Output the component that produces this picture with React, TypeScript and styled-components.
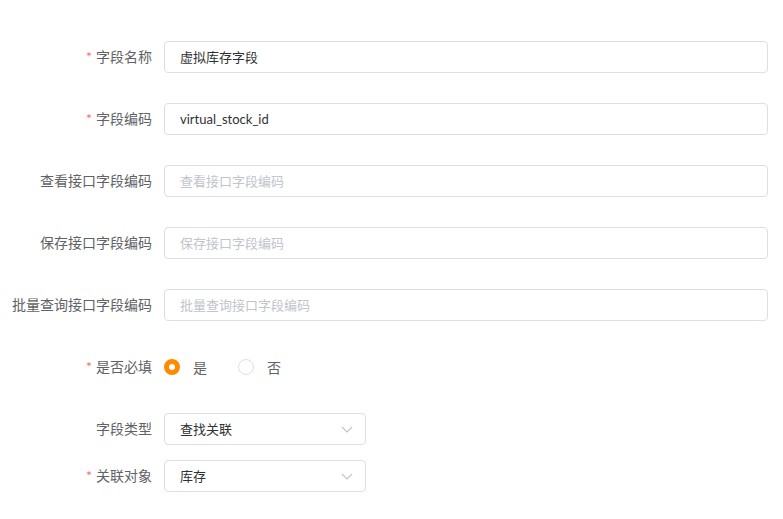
import React from "react";
import styled, { createGlobalStyle } from "styled-components";

const Global = createGlobalStyle`
  html, body { margin: 0; padding: 0; background: #fff; }
  body { font-family: Lato, "Noto Sans CJK SC", sans-serif; font-size: 14px; color: #303133; }
  * { box-sizing: border-box; }
`;

const Form = styled.div`
  display: flex;
  flex-direction: column;
  padding: 41px 15px 0 0;
  width: 783px;
`;

const Row = styled.div<{ $mb: number }>`
  display: flex;
  align-items: center;
  height: 32px;
  margin-bottom: ${(p) => p.$mb}px;
`;

const Label = styled.div`
  width: 152px;
  margin-right: 12px;
  text-align: right;
  color: #606266;
  font-size: 14px;
  line-height: 32px;
  white-space: nowrap;
`;

const Star = styled.span`
  color: #f56c6c;
  margin-right: 4px;
`;

const Input = styled.input`
  flex: 1;
  height: 32px;
  border: 1px solid #dcdfe6;
  border-radius: 4px;
  padding: 0 15px 1px;
  font-family: Lato, "Noto Sans CJK SC", sans-serif;
  font-size: 13px;
  color: #303133;
  outline: none;
  &::placeholder { color: #c0c4cc; }
`;

const Select = styled.div`
  width: 202px;
  height: 32px;
  border: 1px solid #dcdfe6;
  border-radius: 4px;
  padding: 0 12px 1px 15px;
  display: flex;
  align-items: center;
  justify-content: space-between;
  font-size: 13px;
  color: #303133;
`;

const RadioGroup = styled.div`
  display: flex;
  align-items: center;
`;

const RadioItem = styled.label`
  display: flex;
  align-items: center;
  margin-right: 31px;
  color: #606266;
  font-size: 14px;
  cursor: pointer;
`;

const Dot = styled.span<{ $on?: boolean }>`
  width: 16px;
  height: 16px;
  border-radius: 50%;
  border: ${(p) => (p.$on ? "5px solid #ff8a00" : "1px solid #dcdfe6")};
  background: #fff;
  margin-right: 13px;
`;

const Chevron = () => (
  <svg width="12" height="12" viewBox="0 0 12 12" fill="none">
    <path d="M1 4l5 5 5-5" stroke="#c0c4cc" strokeWidth="1.1" />
  </svg>
);

export default function App() {
  return (
    <>
      <Global />
      <Form>
        <Row $mb={30}>
          <Label><Star>*</Star>字段名称</Label>
          <Input defaultValue="虚拟库存字段" />
        </Row>
        <Row $mb={30}>
          <Label><Star>*</Star>字段编码</Label>
          <Input defaultValue="virtual_stock_id" />
        </Row>
        <Row $mb={30}>
          <Label>查看接口字段编码</Label>
          <Input placeholder="查看接口字段编码" />
        </Row>
        <Row $mb={30}>
          <Label>保存接口字段编码</Label>
          <Input placeholder="保存接口字段编码" />
        </Row>
        <Row $mb={30}>
          <Label>批量查询接口字段编码</Label>
          <Input placeholder="批量查询接口字段编码" />
        </Row>
        <Row $mb={30}>
          <Label><Star>*</Star>是否必填</Label>
          <RadioGroup>
            <RadioItem><Dot $on />是</RadioItem>
            <RadioItem><Dot />否</RadioItem>
          </RadioGroup>
        </Row>
        <Row $mb={15}>
          <Label>字段类型</Label>
          <Select>查找关联<Chevron /></Select>
        </Row>
        <Row $mb={0}>
          <Label><Star>*</Star>关联对象</Label>
          <Select>库存<Chevron /></Select>
        </Row>
      </Form>
    </>
  );
}
